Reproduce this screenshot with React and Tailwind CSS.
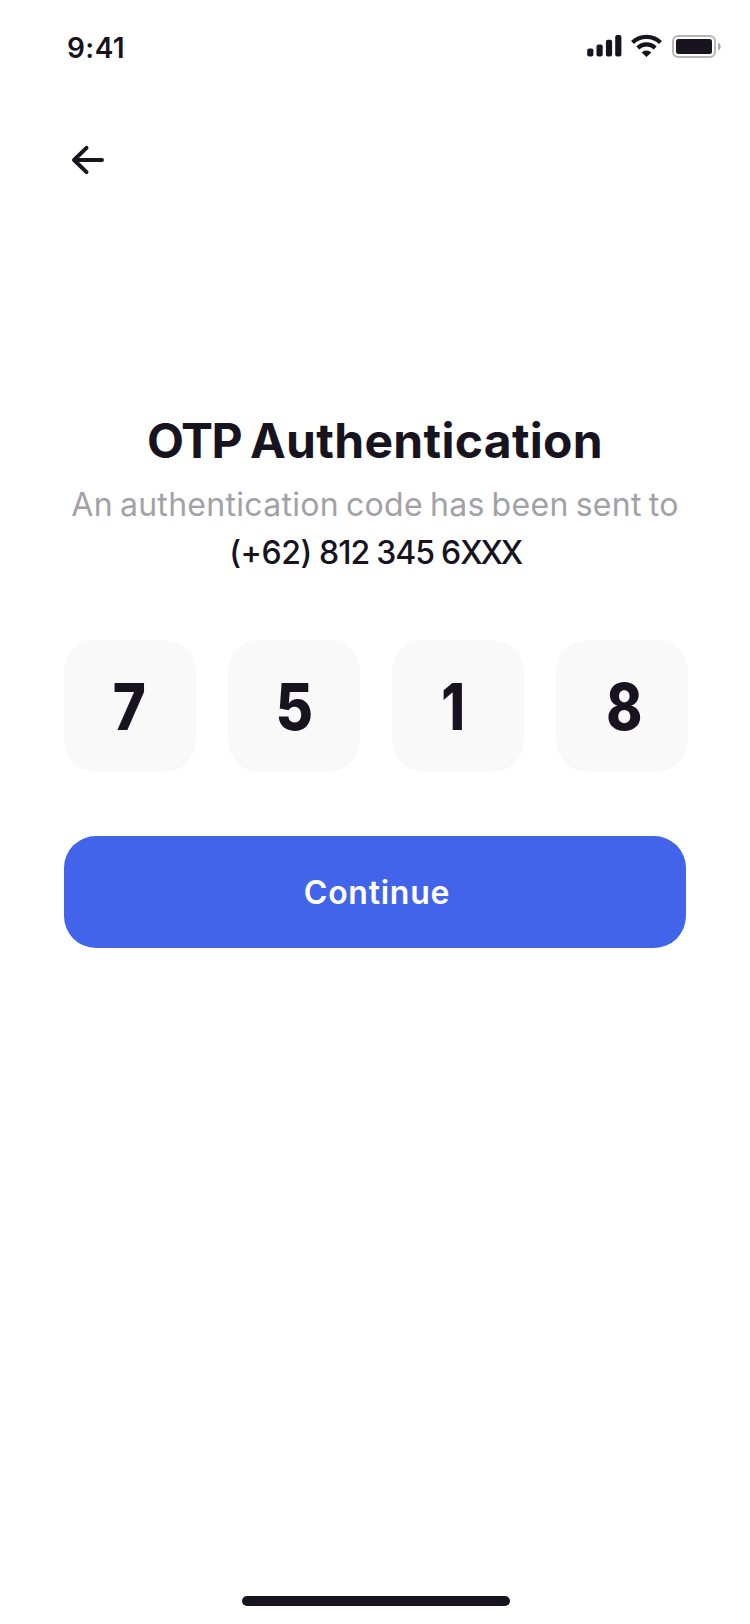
import React from "react";

const DIGITS = [
  { value: "7", shape: "scale-x-88 -translate-x-[0.5px]" },
  { value: "5", shape: "scale-x-90 translate-x-[0.5px]" },
  { value: "1", shape: "scale-x-84 -translate-x-[5px]" },
  { value: "8", shape: "scale-x-85 translate-x-[2px]" },
];

function Signal() {
  return (
    <svg width="34" height="22" viewBox="0 0 34 22" fill="currentColor" className="overflow-visible" aria-hidden="true">
      <rect x="0.2" y="13.4" width="6.2" height="8.2" rx="2" />
      <rect x="9.5" y="9.4" width="6.2" height="12.2" rx="2" />
      <rect x="18.9" y="4.8" width="6.2" height="16.8" rx="2" />
      <rect x="28.2" y="0" width="6.2" height="21.6" rx="2" />
    </svg>
  );
}

function Wifi() {
  return (
    <svg width="31" height="22" viewBox="0 0 31 22" fill="none" stroke="currentColor" strokeWidth="4.2" className="overflow-visible" aria-hidden="true">
      <path d="M1.5 7.6a20.2 20.2 0 0 1 28 0" />
      <path d="M6.8 12.9a12.6 12.6 0 0 1 17.4 0" />
      <path d="M15.5 22l-4.9-4.6a7.2 7.2 0 0 1 9.8 0z" fill="currentColor" stroke="none" />
    </svg>
  );
}

function Battery() {
  return (
    <svg width="49" height="23" viewBox="0 0 49 23" aria-hidden="true">
      <rect x="1" y="1" width="42" height="21" rx="5" fill="none" stroke="#b6b6bb" strokeWidth="2" />
      <rect x="4" y="4" width="36" height="15" rx="2.5" fill="#17141f" />
      <path d="M46 7.5c1.6.7 2.7 2.2 2.7 4s-1.1 3.3-2.7 4z" fill="#aaaaaf" />
    </svg>
  );
}

export default function App() {
  return (
    <main className="flex h-[1624px] w-[750px] flex-col bg-white font-['Inter',sans-serif] text-[#17141f]">
      <header className="flex h-24 items-center justify-between pl-[67px] pr-[29px]">
        <span className="text-[28px] leading-8 font-semibold tracking-[0.4px]">9:41</span>
        <div className="flex items-center gap-[10px] pb-1">
          <Signal />
          <Wifi />
          <Battery />
        </div>
      </header>

      <nav className="flex h-32 items-center px-16">
        <button type="button" aria-label="Back" className="size-12">
          <svg width="48" height="48" viewBox="0 0 48 48" fill="none" stroke="currentColor" strokeWidth="4" strokeLinecap="round" strokeLinejoin="round" aria-hidden="true">
            <path d="M10 24h28M22.5 11.9 10 24l12.5 12.1" />
          </svg>
        </button>
      </nav>

      <section className="flex flex-col items-center pt-[187px]">
        <h1 className="text-5xl leading-[60px] font-bold tracking-[0.3px]">
          <span className="tracking-[-1.5px] [word-spacing:-1px]">OTP </span>Authentication
        </h1>
        <p className="mt-[10px] text-[32px] leading-[48px] tracking-[0.3px] [word-spacing:-2.3px] text-[#a2a1a8]">
          An authentication code has been sent to
        </p>
        <p className="text-[32px] leading-[48px] font-medium tracking-[-1px] [word-spacing:-0.5px]">
          <span className="tracking-[-0.4px]">(+62)</span> 812 345 6<span className="tracking-[-2.2px]">XXX</span>
        </p>
      </section>

      <form className="flex flex-col gap-16 px-16 pt-[63px]">
        <div className="flex gap-8">
          {DIGITS.map(({ value, shape }) => (
            <div key={value} className="flex size-[132px] shrink-0 items-center justify-center rounded-4xl bg-[#f9f9f9] pt-[2px]">
              <span className={`inline-block text-[64px] leading-[88px] font-extrabold ${shape}`}>{value}</span>
            </div>
          ))}
        </div>
        <button type="button" className="h-28 rounded-4xl bg-[#4264eb] pt-[2px] pl-[4px] text-[32px] leading-[48px] font-semibold tracking-[0.75px] text-white">
          Continue
        </button>
      </form>

      <footer className="mt-auto flex justify-center pb-[18px] pl-[2px]">
        <div className="h-[10px] w-[268px] rounded-full bg-[#17141f]" />
      </footer>
    </main>
  );
}
